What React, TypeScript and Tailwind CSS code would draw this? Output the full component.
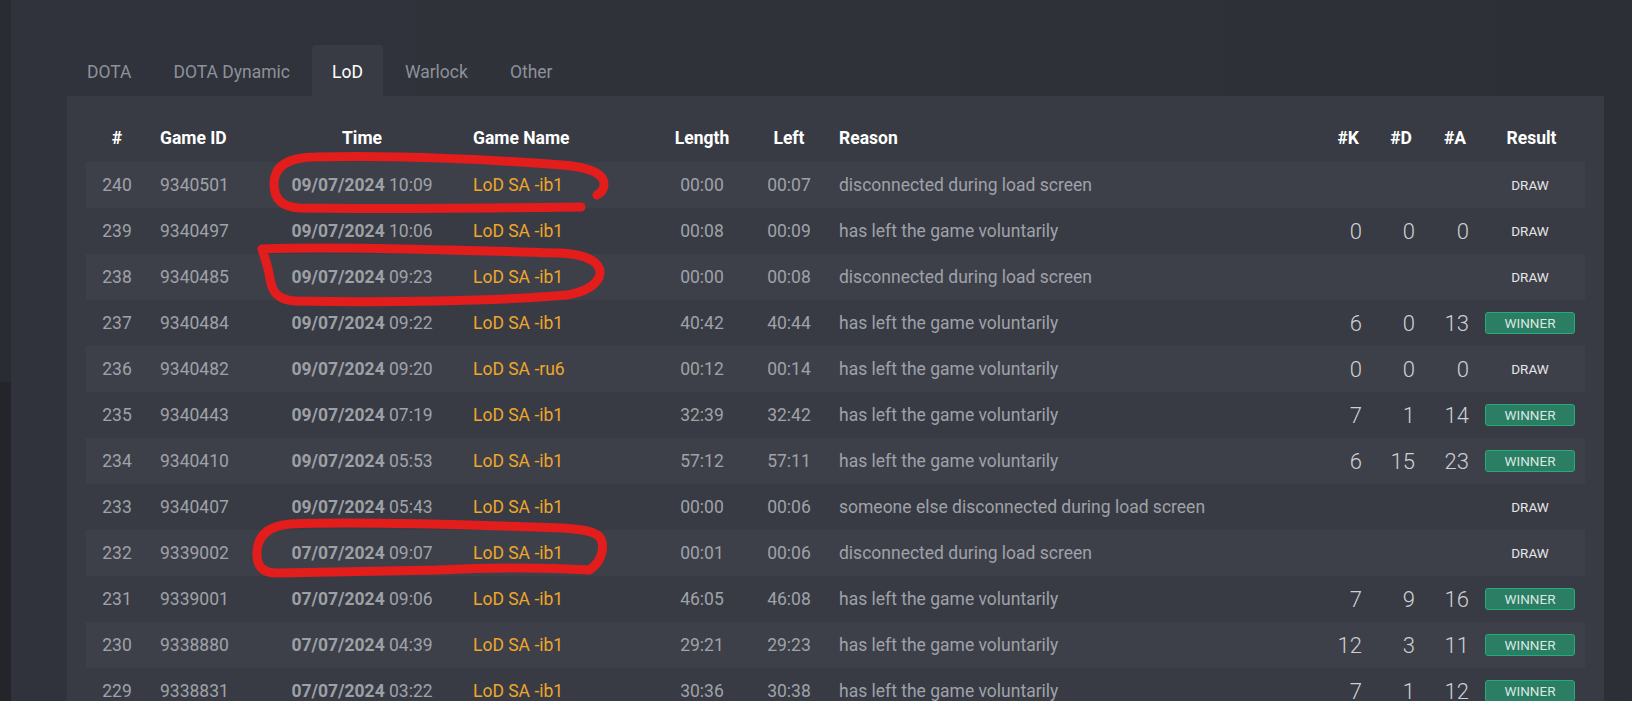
import React from "react";

type Row = {
  n: number;
  id: string;
  date: string;
  time: string;
  name: string;
  len: string;
  left: string;
  reason: string;
  k?: number;
  d?: number;
  a?: number;
  win: boolean;
};

const LEFT = "has left the game voluntarily";
const DISC = "disconnected during load screen";

const rows: Row[] = [
  { n: 240, id: "9340501", date: "09/07/2024", time: "10:09", name: "LoD SA -ib1", len: "00:00", left: "00:07", reason: DISC, win: false },
  { n: 239, id: "9340497", date: "09/07/2024", time: "10:06", name: "LoD SA -ib1", len: "00:08", left: "00:09", reason: LEFT, k: 0, d: 0, a: 0, win: false },
  { n: 238, id: "9340485", date: "09/07/2024", time: "09:23", name: "LoD SA -ib1", len: "00:00", left: "00:08", reason: DISC, win: false },
  { n: 237, id: "9340484", date: "09/07/2024", time: "09:22", name: "LoD SA -ib1", len: "40:42", left: "40:44", reason: LEFT, k: 6, d: 0, a: 13, win: true },
  { n: 236, id: "9340482", date: "09/07/2024", time: "09:20", name: "LoD SA -ru6", len: "00:12", left: "00:14", reason: LEFT, k: 0, d: 0, a: 0, win: false },
  { n: 235, id: "9340443", date: "09/07/2024", time: "07:19", name: "LoD SA -ib1", len: "32:39", left: "32:42", reason: LEFT, k: 7, d: 1, a: 14, win: true },
  { n: 234, id: "9340410", date: "09/07/2024", time: "05:53", name: "LoD SA -ib1", len: "57:12", left: "57:11", reason: LEFT, k: 6, d: 15, a: 23, win: true },
  { n: 233, id: "9340407", date: "09/07/2024", time: "05:43", name: "LoD SA -ib1", len: "00:00", left: "00:06", reason: "someone else disconnected during load screen", win: false },
  { n: 232, id: "9339002", date: "07/07/2024", time: "09:07", name: "LoD SA -ib1", len: "00:01", left: "00:06", reason: DISC, win: false },
  { n: 231, id: "9339001", date: "07/07/2024", time: "09:06", name: "LoD SA -ib1", len: "46:05", left: "46:08", reason: LEFT, k: 7, d: 9, a: 16, win: true },
  { n: 230, id: "9338880", date: "07/07/2024", time: "04:39", name: "LoD SA -ib1", len: "29:21", left: "29:23", reason: LEFT, k: 12, d: 3, a: 11, win: true },
  { n: 229, id: "9338831", date: "07/07/2024", time: "03:22", name: "LoD SA -ib1", len: "30:36", left: "30:38", reason: LEFT, k: 7, d: 1, a: 12, win: true },
];

const GRID =
  "grid grid-cols-[62px_115px_198px_192px_98px_76px_1fr_53px_53px_54px_107px] items-center";

const tabs = ["DOTA", "DOTA Dynamic", "LoD", "Warlock", "Other"];

export default function App() {
  return (
    <div className="relative flex h-[701px] w-full overflow-hidden font-[Roboto,sans-serif]">
      <div className="flex w-[11px] flex-col">
        <div className="h-[382px] bg-[#2a2c33]" />
        <div className="flex-1 bg-[#23252b]" />
      </div>
      <div className="flex-1 bg-linear-to-r from-[#30333b] via-[#2f3239] to-[#2c2f36] pl-[56px] pr-[28px]">
        <div className="mt-[45px] flex gap-0.5">
          {tabs.map((t) => (
            <div
              key={t}
              className={
                t === "LoD"
                  ? "flex h-[51px] items-center rounded-t-[4px] bg-[#383b43] px-5 pt-[3px] text-[17.5px] text-white"
                  : "flex h-[51px] items-center px-5 pt-[3px] text-[17.5px] text-[#8d9199]"
              }
            >
              {t}
            </div>
          ))}
        </div>
        <div className="bg-[#383b43] px-[19px] pt-[18px] pb-6">
          <div className={`${GRID} h-[48px] text-[17.5px] font-bold text-white`}>
            <div className="text-center">#</div>
            <div className="pl-3">Game ID</div>
            <div className="text-center">Time</div>
            <div className="pl-3">Game Name</div>
            <div className="text-center">Length</div>
            <div className="text-center">Left</div>
            <div className="pl-3">Reason</div>
            <div className="pr-3 text-right">#K</div>
            <div className="pr-3 text-right">#D</div>
            <div className="pr-3 text-right">#A</div>
            <div className="text-center">Result</div>
          </div>
          {rows.map((r, i) => (
            <div
              key={r.n}
              className={`${GRID} h-[46px] text-[17.5px] text-[#9fa2a9] ${
                i % 2 === 0 ? "bg-[#3e4049]" : ""
              }`}
            >
              <div className="text-center">{r.n}</div>
              <div className="pl-3">{r.id}</div>
              <div className="text-center">
                <span className="font-bold text-[#9da0a7]">{r.date}</span> {r.time}
              </div>
              <div className="pl-3 text-[#eea62b]">{r.name}</div>
              <div className="text-center">{r.len}</div>
              <div className="text-center">{r.left}</div>
              <div className="pl-3">{r.reason}</div>
              <div className="pr-[9px] text-right text-[22px] font-light text-[#cfd0d4]">{r.k ?? ""}</div>
              <div className="pr-[9px] text-right text-[22px] font-light text-[#cfd0d4]">{r.d ?? ""}</div>
              <div className="pr-[9px] text-right text-[22px] font-light text-[#cfd0d4]">{r.a ?? ""}</div>
              <div className="flex justify-center pr-[3px]">
                {r.win ? (
                  <span className="flex h-[22px] w-[90px] items-center justify-center rounded-[3px] border border-[#22ad7b] bg-[#2b7d63] text-[13.5px] text-[#d7e8e0]">
                    WINNER
                  </span>
                ) : (
                  <span className="text-[13.5px] font-normal text-[#e4e5e7]">DRAW</span>
                )}
              </div>
            </div>
          ))}
        </div>
      </div>
      <svg
        className="pointer-events-none absolute inset-0"
        width="1632"
        height="701"
        viewBox="0 0 1632 701"
        fill="none"
        stroke="#e31c1c"
        strokeWidth="9"
        strokeLinecap="round"
        strokeLinejoin="round"
      >
        <path d="M 581 207 C 500 208 380 209 300 208 C 282 207 274 199 274 184 C 274 166 288 157 316 157 C 400 155 500 160 562 165 C 590 167 604 174 604 184 C 604 190 601 193 597 195" />
        <path d="M 262 249 C 330 246 450 250 560 253 C 588 254 601 263 600 274 C 598 284 586 292 567 295 C 500 301 380 303 295 301 C 278 300 272 292 270 279 C 268 265 264 256 262 249" />
        <path d="M 589 570 C 601 563 605 549 601 539 C 597 531 581 529 561 528 C 450 524 340 522 290 524 C 268 526 258 536 257 551 C 256 566 262 574 280 573 C 340 572 400 571 437 570 C 480 568 540 567 589 570" />
      </svg>
    </div>
  );
}
